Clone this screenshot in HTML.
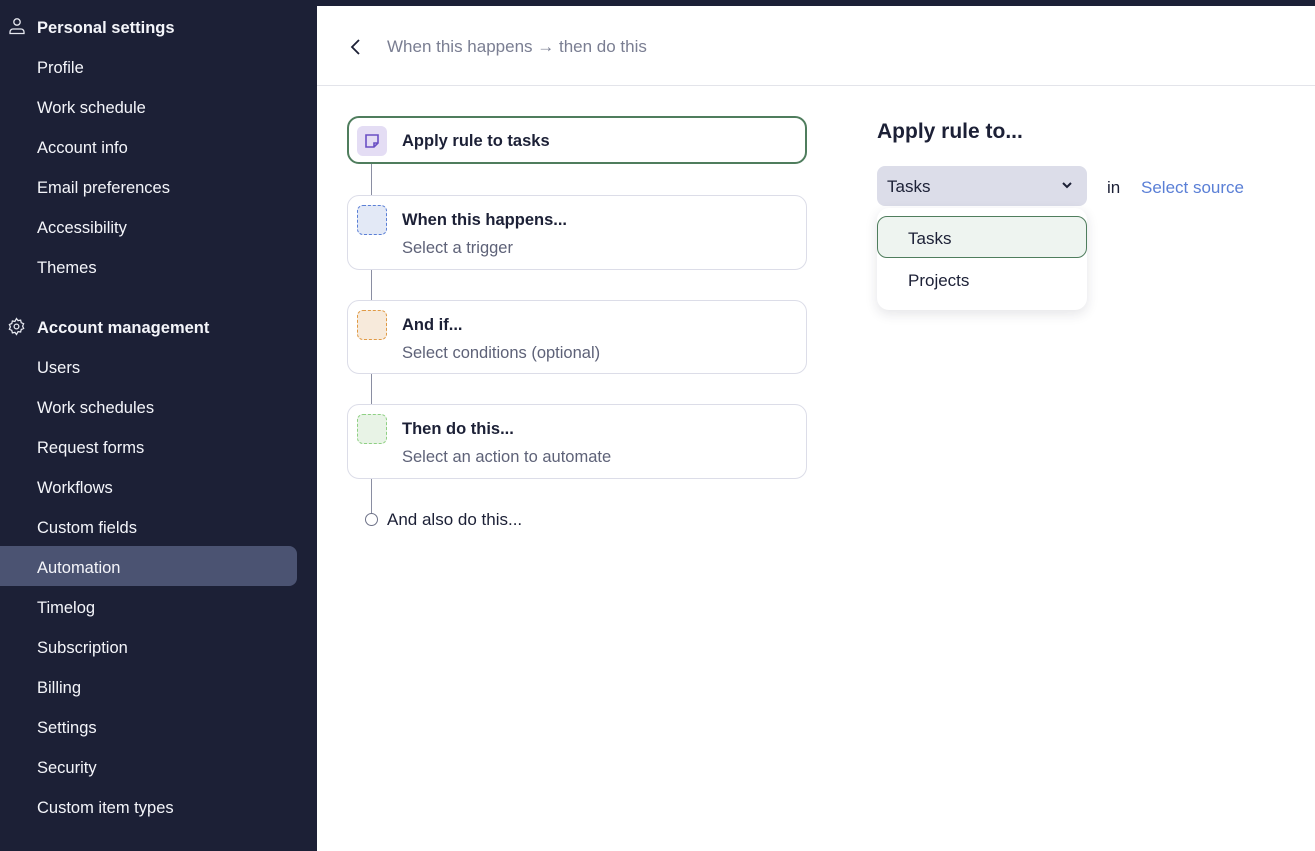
<!DOCTYPE html>
<html><head><meta charset="utf-8"><style>
*{box-sizing:border-box;margin:0;padding:0}
body{width:1315px;height:851px;overflow:hidden;background:#fff;font-family:"Liberation Sans",sans-serif;position:relative}
#sb{position:absolute;left:0;top:0;width:317px;height:851px;background:#1c2036;color:#fff}
.it{position:absolute;left:37px;font-size:16.5px;line-height:20px;color:#f4f5fa}
.h{font-weight:bold}
.act{position:absolute;left:0;top:546px;width:297px;height:40px;background:#4b5372;border-radius:0 8px 8px 0}
.topbar{position:absolute;left:317px;top:0;right:0;height:6px;background:#1c2036}
.hdr{position:absolute;left:317px;top:6px;right:0;height:80px;border-bottom:1px solid #e3e4ea}
.card{position:absolute;left:347px;width:460px;border:1px solid #dcdde8;border-radius:12px;background:#fff}
.ic{position:absolute;left:9px;top:9px;width:30px;height:30px;border-radius:6px}
.t{position:absolute;left:54px;font-size:16.5px;color:#1c2036;font-weight:bold}
.s{position:absolute;left:54px;font-size:16.5px;color:#5e6278}
.line{position:absolute;left:371px;width:1px;background:#8a8ea2}
</style></head><body>
<div id="sb">
<div class="act"></div>
<svg style="position:absolute;left:8px;top:17px" width="18" height="18" viewBox="0 0 18 18" fill="none" stroke="#e6e8f0" stroke-width="1.3"><circle cx="9" cy="5" r="3.2"/><path d="M2 16.5v-1.5a3 3 0 0 1 3-3h8a3 3 0 0 1 3 3v1.5z"/></svg>
<div class="it h" style="top:18px">Personal settings</div>
<div class="it" style="top:58px">Profile</div>
<div class="it" style="top:98px">Work schedule</div>
<div class="it" style="top:138px">Account info</div>
<div class="it" style="top:178px">Email preferences</div>
<div class="it" style="top:218px">Accessibility</div>
<div class="it" style="top:258px">Themes</div>
<svg style="position:absolute;left:7px;top:317px" width="19" height="19" viewBox="0 0 24 24" fill="none" stroke="#e6e8f0" stroke-width="1.6"><circle cx="12" cy="12" r="3"/><path d="M12 2l2 2.6 3.2-.6.8 3.2 3 1.3-1.3 3 1.3 3-3 1.3-.8 3.2-3.2-.6L12 22l-2-2.6-3.2.6-.8-3.2-3-1.3 1.3-3-1.3-3 3-1.3.8-3.2 3.2.6z"/></svg>
<div class="it h" style="top:318px">Account management</div>
<div class="it" style="top:358px">Users</div>
<div class="it" style="top:398px">Work schedules</div>
<div class="it" style="top:438px">Request forms</div>
<div class="it" style="top:478px">Workflows</div>
<div class="it" style="top:518px">Custom fields</div>
<div class="it" style="top:558px">Automation</div>
<div class="it" style="top:598px">Timelog</div>
<div class="it" style="top:638px">Subscription</div>
<div class="it" style="top:678px">Billing</div>
<div class="it" style="top:718px">Settings</div>
<div class="it" style="top:758px">Security</div>
<div class="it" style="top:798px">Custom item types</div>
</div>
<div class="topbar"></div>
<div class="hdr">
<svg style="position:absolute;left:33px;top:32px" width="12" height="18" viewBox="0 0 12 18" fill="none" stroke="#1c2036" stroke-width="1.8"><path d="M9 2L2 9l7 7"/></svg>
<div style="position:absolute;left:70px;top:31px;font-size:17px;color:#7a7e92">When this happens → then do this</div>
</div>
<div class="line" style="top:163px;height:352px"></div>
<div class="card" style="top:116px;height:48px;border:2px solid #4f7d5d">
<div class="ic" style="left:8px;top:8px;background:#e4ddf4"><svg width="30" height="30" viewBox="0 0 30 30" fill="none" stroke="#6a4fc4" stroke-width="1.6"><path d="M9 9h12v8l-4 4H9z M17 21v-4h4"/></svg></div>
<div class="t" style="top:14px;left:53px">Apply rule to tasks</div></div>
<div class="card" style="top:195px;height:75px"><div class="ic" style="background:#e3e9f6;border:1px dashed #5a7fd6"></div><div class="t" style="top:15px">When this happens...</div><div class="s" style="top:43px">Select a trigger</div></div>
<div class="card" style="top:300px;height:74px"><div class="ic" style="background:#f7eadb;border:1px dashed #e09a45"></div><div class="t" style="top:15px">And if...</div><div class="s" style="top:43px">Select conditions (optional)</div></div>
<div class="card" style="top:404px;height:75px"><div class="ic" style="background:#e8f3e6;border:1px dashed #8ed083"></div><div class="t" style="top:15px">Then do this...</div><div class="s" style="top:43px">Select an action to automate</div></div>
<div style="position:absolute;left:365px;top:513px;width:13px;height:13px;border:1.5px solid #6e7288;border-radius:50%;background:#fff"></div>
<div style="position:absolute;left:387px;top:510px;font-size:17px;color:#1c2036">And also do this...</div>
<div style="position:absolute;left:877px;top:120px;font-size:21px;font-weight:bold;color:#1c2036">Apply rule to...</div>
<div style="position:absolute;left:877px;top:166px;width:210px;height:40px;background:#dcdde9;border-radius:8px"><span style="position:absolute;left:10px;top:11px;font-size:17px;color:#1c2036">Tasks</span><svg style="position:absolute;left:185px;top:16px" width="10" height="7" viewBox="0 0 10 7" fill="none" stroke="#1c2036" stroke-width="2"><path d="M1 1l4 4 4-4"/></svg></div>
<div style="position:absolute;left:1107px;top:178px;font-size:17px;color:#1c2036">in</div>
<div style="position:absolute;left:1141px;top:178px;font-size:17px;color:#5a7fd6">Select source</div>
<div style="position:absolute;left:877px;top:208px;width:210px;height:102px;background:#fff;border-radius:12px;box-shadow:0 4px 12px rgba(30,35,60,.12)">
<div style="position:absolute;left:0;top:8px;width:210px;height:42px;background:#eef4f0;border:1px solid #4f7d5d;border-radius:10px"><span style="position:absolute;left:30px;top:12px;font-size:17px;color:#1c2036">Tasks</span></div>
<span style="position:absolute;left:31px;top:63px;font-size:17px;color:#1c2036">Projects</span></div>
</body></html>
